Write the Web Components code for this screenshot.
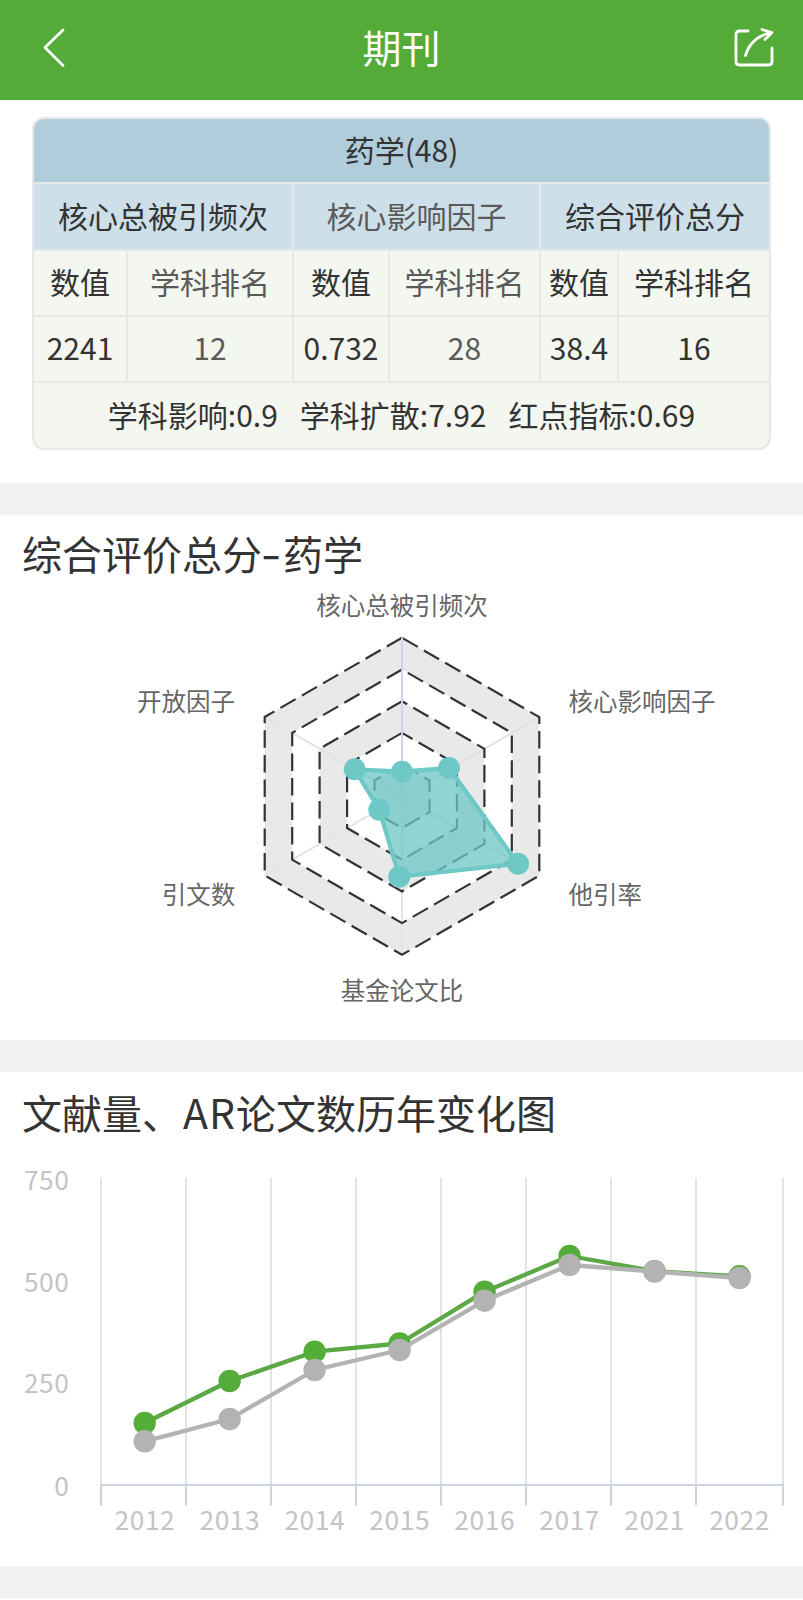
<!DOCTYPE html>
<html lang="zh-CN">
<head>
<meta charset="utf-8">
<title>期刊</title>
<style>
    body {
        margin: 0;
        background: #f2f2f2;
        color: #333;
        font-family: "Noto Sans CJK SC", "Noto Sans", sans-serif;
    }
    journal-page {
        height: 1600px;
    }
</style>
</head>
<body>
<journal-page></journal-page>

<script>
function makeTemplate(html){
    var t = document.createElement("template");
    t.innerHTML = html;
    return t;
}

/* top bar with back and share buttons */
var headerTemplate = makeTemplate(`
<style>
    :host {
        display: grid;
        grid-template-columns: 1fr auto 1fr;
        box-sizing: border-box;
        height: 100px;
        padding: 0 28px 5px;
        align-items: center;
        background: #54ab38;
        color: #fff;
    }
    h1 {
        margin: 0;
        padding-bottom: 3px;
        font-size: 39px;
        line-height: 56px;
        font-weight: 400;
    }
    svg {
        display: block;
        fill: none;
        stroke: #fff;
        stroke-width: 2.8;
        stroke-linecap: round;
        stroke-linejoin: round;
    }
    .back { margin-left: 13px; }
    .share { justify-self: end; }
</style>
<svg class="back" width="40" height="42" viewBox="0 0 40 42"><path d="M22 3 L4 20.500 L22 38.500"/></svg>
<h1><slot></slot></h1>
<svg class="share" width="42" height="42" viewBox="0 0 42 42">
    <path d="M15 4 H6.500 Q3 4 3 7.500 V34.500 Q3 38 6.500 38 H35.500 Q39 38 39 34.500 V21"/>
    <path d="M12.500 28.500 C15 19.500 22 9.500 38 5.500 M29 2.500 L39 5.500 L32 12.500"/>
</svg>
`);

class AppHeader extends HTMLElement {
    constructor(){
        super();
        this.attachShadow({mode:"open"}).appendChild(headerTemplate.content.cloneNode(true));
    }
}
customElements.define("app-header", AppHeader);

/* white block with an optional title */
var sectionTemplate = makeTemplate(`
<style>
    :host {
        display: block;
        box-sizing: border-box;
        background: #fff;
    }
    ::slotted(h2) {
        box-sizing: border-box;
        height: 70px;
        margin: 0;
        padding: 10px 0 0 22px;
        font-size: 40px;
        line-height: 60px;
        font-weight: 400;
        white-space: nowrap;
    }
</style>
<slot name="title"></slot>
<slot></slot>
`);

class PageSection extends HTMLElement {
    constructor(){
        super();
        this.attachShadow({mode:"open"}).appendChild(sectionTemplate.content.cloneNode(true));
    }
}
customElements.define("page-section", PageSection);

var tableTemplate = makeTemplate(`
<style>
    :host {
        display: grid;
        grid-template-columns: 92px 164px 94px 149px 76px 150px;
        grid-template-rows: 63px 65px 64px 64px 65px;
        gap: 2px;
        width: 735px;
        border: 2px solid #e4e8ea;
        border-radius: 12px;
        overflow: hidden;
        background: #e4e8e8;
        font-size: 30px;
        line-height: 44px;
        white-space: nowrap;
    }
    div {
        display: flex;
        box-sizing: border-box;
        padding-bottom: 4px;
        align-items: center;
        justify-content: center;
        background: #f4f7f0;
    }
    .subject { grid-column: span 6; background: #b1cddb; }
    .group { grid-column: span 2; background: #cddfe9; }
    .soft { color: #5a5a5a; }
    .summary { grid-column: span 6; gap: 22px; }
</style>
<div class="subject">药学(48)</div>
<div class="group">核心总被引频次</div>
<div class="group soft">核心影响因子</div>
<div class="group">综合评价总分</div>
<div>数值</div><div class="soft">学科排名</div>
<div>数值</div><div class="soft">学科排名</div>
<div>数值</div><div>学科排名</div>
<div>2241</div><div class="soft">12</div>
<div>0.732</div><div class="soft">28</div>
<div>38.4</div><div>16</div>
<div class="summary"><span>学科影响:0.9</span><span>学科扩散:7.92</span><span>红点指标:0.69</span></div>
`);

class RankTable extends HTMLElement {
    constructor(){
        super();
        this.attachShadow({mode:"open"}).appendChild(tableTemplate.content.cloneNode(true));
    }
}
customElements.define("rank-table", RankTable);

var radarTemplate = makeTemplate(`
<style>
    :host { display: block; height: 455px; }
    svg { display: block; }
    text { font-size: 24.5px; fill: #666; }
    .ring { stroke: #333; stroke-width: 2.2; stroke-dasharray: 17.5 7.05; }
    .axis { stroke: #e2e3e5; stroke-width: 2; }
    .axis.main { stroke: #ccd4e6; }
    .area { fill: #6dc8c6; fill-opacity: .76; stroke: #6dc8c6; stroke-width: 4.3; stroke-linejoin: round; }
    .dot { fill: #6dc8c6; }
</style>
<svg width="803" height="455"></svg>
`);

class RadarChart extends HTMLElement {
    constructor(){
        super();
        this.attachShadow({mode:"open"}).appendChild(radarTemplate.content.cloneNode(true));
        this.cx = 402;
        this.cy = 211.3;
        this.radius = 158.5;
    }

    connectedCallback(){
        this.draw();
    }

    // i counts the corners counterclockwise from the top
    corner(i, r){
        var a = Math.PI / 2 + i * Math.PI / 3;
        return [(this.cx + r * Math.cos(a)).toFixed(1), (this.cy - r * Math.sin(a)).toFixed(1)];
    }

    hexagon(n){
        return [0,1,2,3,4,5].map(i => this.corner(i, this.radius * n / 5).join(",")).join(" ");
    }

    axis(i, cls){
        var p = this.corner(i, this.radius);
        return `<line class="${cls}" x1="${this.cx}" y1="${this.cy}" x2="${p[0]}" y2="${p[1]}"/>`;
    }

    draw(){
        var out = "";
        for (let n = 5; n > 0; n--) {
            out += `<polygon points="${this.hexagon(n)}" fill="${n % 2 ? "#e9e9e9" : "#fff"}"/>`;
        }
        for (let i = 1; i < 6; i++) {
            out += this.axis(i, "axis");
        }
        for (let n = 1; n <= 5; n++) {
            out += `<polygon class="ring" fill="none" points="${this.hexagon(n)}"/>`;
        }
        out += this.axis(0, "axis main");

        var points = [[402,186.7],[449,183],[518,278.7],[399.3,291.7],[379.3,224.7],[354.7,184.3]];
        out += `<polygon class="area" points="${points.map(p => p.join(",")).join(" ")}"/>`;
        points.forEach(p => out += `<circle class="dot" cx="${p[0]}" cy="${p[1]}" r="11"/>`);

        var labels = [
            ["核心总被引频次", 402, 29.6, "middle"],
            ["核心影响因子", 568.5, 125.7, "start"],
            ["他引率", 568.5, 318.7, "start"],
            ["基金论文比", 402, 414.8, "middle"],
            ["引文数", 235.3, 318.7, "end"],
            ["开放因子", 235, 125.7, "end"]
        ];
        labels.forEach(l => out += `<text x="${l[1]}" y="${l[2]}" text-anchor="${l[3]}">${l[0]}</text>`);
        this.shadowRoot.querySelector("svg").innerHTML = out;
    }
}
customElements.define("radar-chart", RadarChart);

var lineTemplate = makeTemplate(`
<style>
    :host { display: block; height: 424px; }
    svg { display: block; }
    text { font-size: 26.3px; letter-spacing: .6px; fill: #c4c4c6; }
    .grid { stroke: #e3e3e4; stroke-width: 2; }
    .axis { stroke: #cbd3df; stroke-width: 2; }
    .line { fill: none; stroke-width: 4.3; stroke-linejoin: round; }
</style>
<svg width="803" height="424"></svg>
`);

class LineChart extends HTMLElement {
    constructor(){
        super();
        this.attachShadow({mode:"open"}).appendChild(lineTemplate.content.cloneNode(true));
    }

    connectedCallback(){
        this.draw();
    }

    series(ys, lineColor, dotColor){
        var pts = ys.map((y, i) => [144.7 + i * 84.97, y]);
        return `<polyline class="line" stroke="${lineColor}" points="${pts.map(p => p.join(",")).join(" ")}"/>`
            + pts.map(p => `<circle cx="${p[0]}" cy="${p[1]}" r="11.2" fill="${dotColor}"/>`).join("");
    }

    draw(){
        var out = "";
        [101,186,271,356,441,526,611,696,783].forEach(x => {
            out += `<line class="grid" x1="${x}" y1="35.500" x2="${x}" y2="343"/>`;
            out += `<line class="axis" x1="${x}" y1="343" x2="${x}" y2="363.500"/>`;
        });
        out += `<line class="axis" x1="100" y1="343" x2="784" y2="343"/>`;
        [["750",47.5],["500",150.3],["250",251],["0",353.6]].forEach(l => {
            out += `<text x="69.500" y="${l[1]}" text-anchor="end">${l[0]}</text>`;
        });
        [2012,2013,2014,2015,2016,2017,2021,2022].forEach((year, i) => {
            out += `<text x="${144.9 + i * 84.95}" y="387.500" text-anchor="middle">${year}</text>`;
        });
        out += this.series([281,239,209.7,201.5,149.7,114,129.2,134.3], "#5ca845", "#54ad39");
        out += this.series([299.3,277,228,208,158.7,123,129.5,136], "#b3b3b4", "#b3b3b4");
        this.shadowRoot.querySelector("svg").innerHTML = out;
    }
}
customElements.define("line-chart", LineChart);

var pageTemplate = makeTemplate(`
<style>
    :host {
        display: flex;
        flex-direction: column;
        overflow: hidden;
    }
    .rank { height: 383px; padding: 17px 32px 0; }
    .radar { height: 525px; margin-top: 32px; }
    .radar h2 { padding-top: 8px; }
    .years { height: 494px; margin-top: 32px; }
    .rest { height: 2px; margin-top: 32px; }
    .dash {
        display: inline-block;
        width: 21px;
        line-height: 1;
        font-family: Inter, sans-serif;
        transform: scaleX(1.15);
    }
    .latin { margin-left: 1px; font-size: 41px; line-height: 1; letter-spacing: 1px; }
</style>
<app-header>期刊</app-header>
<page-section class="rank"><rank-table></rank-table></page-section>
<page-section class="radar">
    <h2 slot="title">综合评价总分<span class="dash">-</span>药学</h2>
    <radar-chart></radar-chart>
</page-section>
<page-section class="years">
    <h2 slot="title">文献量、<span class="latin">AR</span>论文数历年变化图</h2>
    <line-chart></line-chart>
</page-section>
<page-section class="rest"></page-section>
`);

class JournalPage extends HTMLElement {
    constructor(){
        super();
        this.attachShadow({mode:"open"}).appendChild(pageTemplate.content.cloneNode(true));
    }
}
customElements.define("journal-page", JournalPage);
</script>
</body>
</html>
